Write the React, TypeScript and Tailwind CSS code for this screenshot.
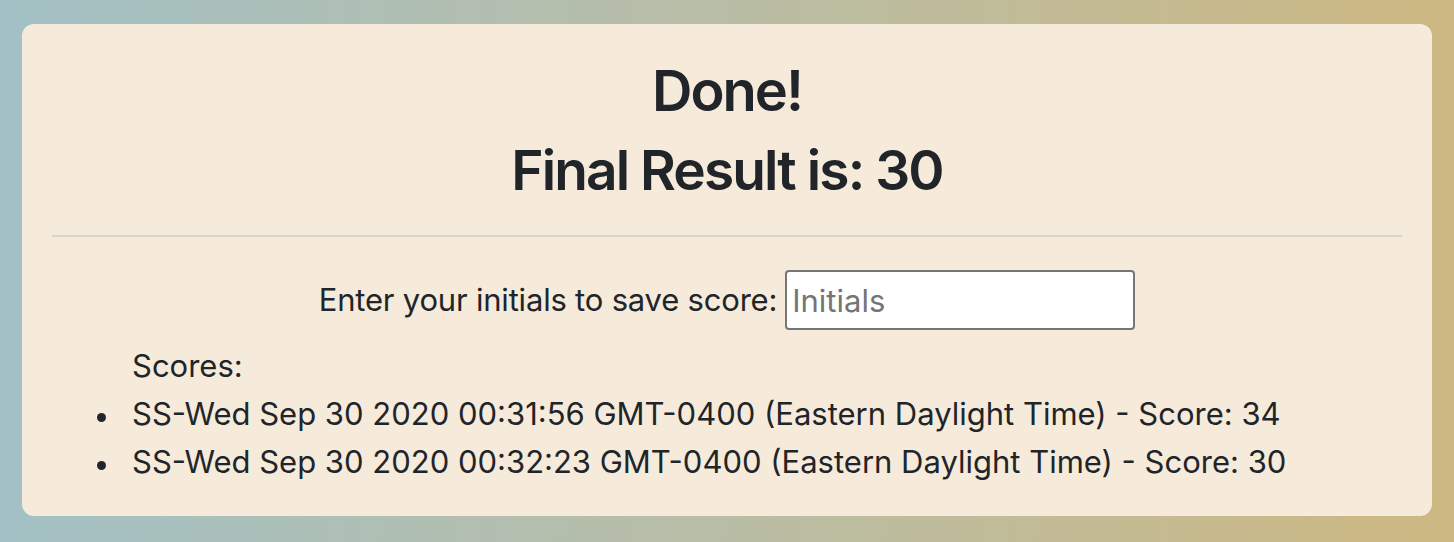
export default function App() {
  const scores = [
    'SS-Wed Sep 30 2020 00:31:56 GMT-0400 (Eastern Daylight Time) - Score: 34',
    'SS-Wed Sep 30 2020 00:32:23 GMT-0400 (Eastern Daylight Time) - Score: 30',
  ];

  return (
    <div
      className="w-[1454px] h-[542px] bg-gradient-to-r from-[#a3c1c5] to-[#cdb882] px-[22px] pt-[24px] text-[#212529]"
      style={{ fontFamily: 'Inter, "Noto Sans", sans-serif' }}
    >
      <div className="h-[492px] rounded-[12px] bg-[#f6ebdb] px-[30px] pt-[34px]">
        <h1 className="text-center text-[56px] font-semibold leading-[1.2] tracking-[-2px]">Done!</h1>
        <h1 className="mt-[12px] text-center text-[55px] font-semibold leading-[1.2] tracking-[-1.9px]">
          Final Result is: 30
        </h1>
        <hr className="mt-[32px] border-t-2 border-[#d9d4ca]" />
        <div className="mt-[33px] flex items-center justify-center gap-[8px] text-[31px]">
          <span className="tracking-[-0.2px]">Enter your initials to save score:</span>
          <input
            type="text"
            placeholder="Initials"
            className="h-[60px] w-[350px] rounded-[4px] border-2 border-[#767676] bg-white px-[5px] text-[31px] placeholder:text-[#757575] outline-none"
          />
        </div>
        <div className="mt-[12px] pl-[80px] text-[31px] leading-[48px]">Scores:</div>
        <ul className="pl-[80px] text-[31px] leading-[48px]">
          {scores.map((s) => (
            <li key={s} className="flex items-start">
              <span className="-ml-[35px] mr-[26px] mt-[23px] h-[9px] w-[9px] shrink-0 rounded-full bg-[#212529]" />
              <span>{s}</span>
            </li>
          ))}
        </ul>
      </div>
    </div>
  );
}
